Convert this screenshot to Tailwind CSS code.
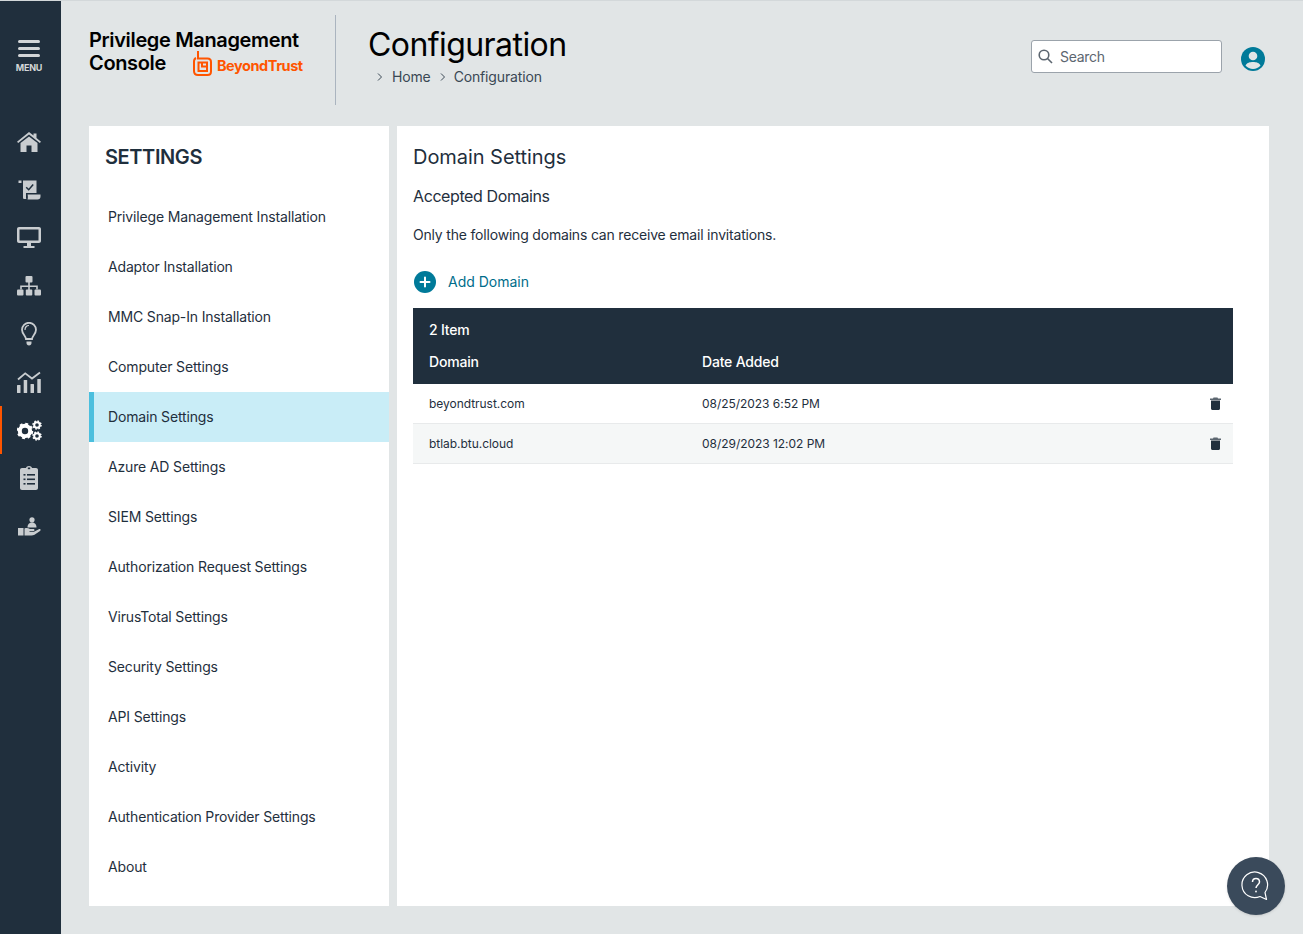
<!DOCTYPE html>
<html>
<head>
<meta charset="utf-8">
<script src="https://cdn.jsdelivr.net/npm/@tailwindcss/browser@4"></script>
</head>
<body class="m-0 overflow-hidden">
<div class="relative flex h-[934px] w-[1303px] overflow-hidden border-t border-[#d3d8da] bg-[#e1e5e6] font-['Inter',sans-serif] text-[#1f2f3d]">
  <aside class="flex h-full w-[61px] shrink-0 flex-col bg-[#202f3d] text-[#c9cdd0]">
    <div class="flex h-[117px] flex-col items-center pt-[39px] pr-[3px]">
      <svg width="22" height="18" viewBox="0 0 22 18" fill="#d3d6d8"><rect x="0" y="0" width="22" height="3" rx="1.500"/><rect x="0" y="7" width="22" height="3" rx="1.500"/><rect x="0" y="14" width="22" height="3" rx="1.500"/></svg>
      <span class="mt-[5px] text-[9px] leading-[10px] font-bold tracking-[-0.2px] text-[#d3d6d8]">MENU</span>
    </div>
    <nav class="flex flex-col pr-[3px]">
      <a class="flex h-12 items-center justify-center"><svg width="24" height="20" viewBox="0 0 24 20" fill="#c9cdd0"><path d="M12 0 L16.500 3.600V1.500H19.500V6L24 9.700 22.800 11 12 2.400 1.200 11 0 9.700Z"/><path d="M12 4.400 20.500 11V20H14.500V13.500H9.500V20H3.500V11Z"/></svg></a>
      <a class="flex h-12 items-center justify-center"><svg width="23" height="20" viewBox="0 0 23 20" fill="#c9cdd0"><path d="M0.500 0.500H3.500V3H0.500Z"/><path d="M5 0.500H18.500V13H8V18C8 18.600 8.400 19 9 19H6.500C5.500 19 5 18.500 5 17.500V3Z"/><path d="M9.500 14.500H22.500V16.500C22.500 18.400 21.400 19.500 19.500 19.500H9.500C10 18.500 10 15.500 9.500 14.500Z"/><path d="M8.200 7.200 10.700 9.700 15.200 4.500" fill="none" stroke="#202f3d" stroke-width="1.500"/></svg></a>
      <a class="flex h-12 items-center justify-center"><svg width="24" height="22" viewBox="0 0 24 22" fill="#c9cdd0"><path fill-rule="evenodd" d="M2 0H22C23.100 0 24 .9 24 2V14C24 15.100 23.100 16 22 16H2C.9 16 0 15.100 0 14V2C0 .9.9 0 2 0ZM2.500 2.500V13.500H21.500V2.500Z"/><path d="M10 16H14V19H17.500V21H6.500V19H10Z"/></svg></a>
      <a class="flex h-12 items-center justify-center"><svg width="24" height="20" viewBox="0 0 24 20" fill="#c9cdd0"><rect x="8.500" y="0" width="7" height="6.500" rx="1"/><rect x="11.200" y="6" width="1.600" height="8"/><path d="M3.200 13.500V9.500H20.800V13.500H19.200V11H4.800V13.500Z"/><rect x="0" y="13.500" width="6.500" height="6" rx="1"/><rect x="8.800" y="13.500" width="6.500" height="6" rx="1"/><rect x="17.500" y="13.500" width="6.500" height="6" rx="1"/></svg></a>
      <a class="flex h-12 items-center justify-center"><svg width="16" height="24" viewBox="0 0 16 24" fill="none" stroke="#c9cdd0" stroke-width="1.800"><path d="M5 17C5 14 1 12 1 7.800A7 7 0 0 1 15 7.800C15 12 11 14 11 17Z"/><path d="M8 3.500C5.500 3.500 4 5.500 4 8" stroke-width="1.200"/><path d="M5.500 19.500H10.500V21C10.500 22.500 9.500 23.500 8 23.500S5.500 22.500 5.500 21Z" fill="#c9cdd0" stroke="none"/></svg></a>
      <a class="flex h-12 items-center justify-center"><svg width="24" height="22" viewBox="0 0 24 22" fill="#c9cdd0"><rect x="0" y="14" width="3.500" height="8" rx=".5"/><rect x="6.700" y="9" width="3.500" height="13" rx=".5"/><rect x="13.500" y="13" width="3.500" height="9" rx=".5"/><rect x="20.300" y="8" width="3.500" height="14" rx=".5"/><path d="M1 8.500 8.200 2.300 15 7.500 23 1.500" fill="none" stroke="#c9cdd0" stroke-width="1.800"/></svg></a>
      <a class="relative flex h-12 items-center justify-center"><span class="absolute top-0 left-0 h-12 w-[2px] bg-[#ff5500]"></span><svg width="25" height="21" viewBox="0 0 25 21" fill="#ffffff"><circle cx="8" cy="11" r="5.200" fill="none" stroke="#fff" stroke-width="4"/><circle cx="8" cy="11" r="7" fill="none" stroke="#fff" stroke-width="2.500" stroke-dasharray="2.800 2.700"/><circle cx="20" cy="5" r="2.800" fill="none" stroke="#fff" stroke-width="2"/><circle cx="20" cy="5" r="4" fill="none" stroke="#fff" stroke-width="1.500" stroke-dasharray="1.600 1.540"/><circle cx="20" cy="16" r="2.800" fill="none" stroke="#fff" stroke-width="2"/><circle cx="20" cy="16" r="4" fill="none" stroke="#fff" stroke-width="1.500" stroke-dasharray="1.600 1.540"/></svg></a>
      <a class="flex h-12 items-center justify-center"><svg width="18" height="24" viewBox="0 0 18 24" fill="#c9cdd0"><path d="M2 2H6C6.200 .8 7.500 0 9 0S11.800 .8 12 2H16C17.100 2 18 2.900 18 4V22C18 23.100 17.100 24 16 24H2C.9 24 0 23.100 0 22V4C0 2.900.9 2 2 2Z"/><g fill="#202f3d"><rect x="7.800" y="1.500" width="2.400" height="1.700"/><rect x="3.500" y="8" width="2" height="1.600"/><rect x="7" y="8" width="8" height="1.600"/><rect x="3.500" y="12.500" width="2" height="1.600"/><rect x="7" y="12.500" width="8" height="1.600"/><rect x="3.500" y="17" width="2" height="1.600"/><rect x="7" y="17" width="8" height="1.600"/></g></svg></a>
      <a class="flex h-12 items-center justify-center"><svg width="23" height="19" viewBox="0 0 23 19" fill="#c9cdd0"><circle cx="14" cy="2.800" r="2.600"/><path d="M9.500 10.500C9.500 7 11.500 5.500 14 5.500S18.500 7 18.500 10.500Z"/><rect x="0" y="11" width="5.500" height="7.500"/><path d="M6.500 11.500C8.500 10.800 10 11 12 12H15.500C16.800 12 16.800 14.200 15.500 14.200H11.500V15H15.500L20.800 12.200C22.300 11.600 23.300 13 22 14L16.500 17.800C15.500 18.400 14.500 18.500 13.500 18.500H6.500Z"/></svg></a>
    </nav>
  </aside>

  <div class="min-w-0 flex-1">
    <header class="flex h-[125px] items-start">
      <div class="ml-[28px] w-[246px] pt-[27px]">
        <div class="text-[20px] leading-[24px] font-semibold tracking-[-0.35px] text-black">Privilege Management</div>
        <div class="flex h-[22px] items-center text-[20px] leading-[22px] font-semibold tracking-[-0.35px] text-black">Console
          <svg class="ml-[27px]" width="19" height="25" viewBox="0 0 19 25" fill="none" stroke="#ff5500" stroke-width="2"><path d="M5 0V7.500H14.500C16.500 7.500 18 9 18 11V20.500C18 22.500 16.500 24 14.500 24H5C2.500 24 1 22.500 1 20V10.500C1 8.500 1.800 7.500 3 7"/><path d="M5.500 11.500H14V20H5.500Z"/><path d="M9 11.500V15.500H14"/></svg>
          <span class="ml-[5px] mt-[5px] text-[14.5px] font-bold tracking-[-0.45px] text-[#ff5500]">BeyondTrust</span>
        </div>
      </div>
      <div class="mt-[14px] h-[90px] w-px bg-[#aab4bf]"></div>
      <div class="ml-[32px] pt-[24px]">
        <h1 class="text-[32px] leading-[39px] font-normal tracking-[-0.57px] text-black">Configuration</h1>
        <div class="mt-[3px] flex items-center text-sm leading-[20px] tracking-[-0.15px] text-[#3a4854]">
          <svg class="ml-[9px] mr-[9px]" width="6" height="8" viewBox="0 0 6 8" fill="none" stroke="#3a4854"><path d="M1 .5 4.500 4 1 7.500"/></svg>Home
          <svg class="ml-[9px] mr-[8px]" width="6" height="8" viewBox="0 0 6 8" fill="none" stroke="#3a4854"><path d="M1 .5 4.500 4 1 7.500"/></svg>Configuration
        </div>
      </div>
      <div class="ml-auto flex items-center pr-[38px] pt-[39px]">
        <div class="flex h-[33px] w-[191px] items-center rounded-[3px] border border-[#9ba3ab] bg-white pl-[6px]">
          <svg width="15" height="15" viewBox="0 0 15 15" fill="none" stroke="#5c6670" stroke-width="1.600"><circle cx="6" cy="6" r="4.800"/><path d="M9.500 9.500 14 14"/></svg>
          <span class="ml-[7px] text-sm tracking-[-0.3px] text-[#5c6670]">Search</span>
        </div>
        <svg class="ml-[19px] mt-[4px]" width="24" height="24" viewBox="0 0 24 24"><circle cx="12" cy="12" r="12" fill="#007a99"/><circle cx="12" cy="9" r="4.300" fill="#e1e5e6"/><path d="M4.500 18.500C6 15.500 9 15 12 15S18 15.500 19.500 18.500C17.500 20.800 15 22 12 22S6.500 20.800 4.500 18.500Z" fill="#e1e5e6"/></svg>
      </div>
    </header>

    <main class="ml-[28px] flex h-[780px] w-[1180px] gap-2">
      <section class="w-[300px] shrink-0 bg-white">
        <h2 class="h-[66px] pt-[19px] pl-[16px] text-[20px] leading-[24px] font-semibold tracking-[-0.4px] text-[#1f2f3d]">SETTINGS</h2>
        <ul class="text-sm tracking-[-0.16px] text-[#1f2f3d]">
          <li class="flex h-[50px] items-center pl-[19px]">Privilege Management Installation</li>
          <li class="flex h-[50px] items-center pl-[19px]">Adaptor Installation</li>
          <li class="flex h-[50px] items-center pl-[19px]">MMC Snap-In Installation</li>
          <li class="flex h-[50px] items-center pl-[19px]">Computer Settings</li>
          <li class="flex h-[50px] items-center border-l-[5px] border-[#4bbfde] bg-[#c9edf7] pl-[14px]">Domain Settings</li>
          <li class="flex h-[50px] items-center pl-[19px]">Azure AD Settings</li>
          <li class="flex h-[50px] items-center pl-[19px]">SIEM Settings</li>
          <li class="flex h-[50px] items-center pl-[19px]">Authorization Request Settings</li>
          <li class="flex h-[50px] items-center pl-[19px]">VirusTotal Settings</li>
          <li class="flex h-[50px] items-center pl-[19px]">Security Settings</li>
          <li class="flex h-[50px] items-center pl-[19px]">API Settings</li>
          <li class="flex h-[50px] items-center pl-[19px]">Activity</li>
          <li class="flex h-[50px] items-center pl-[19px]">Authentication Provider Settings</li>
          <li class="flex h-[50px] items-center pl-[19px]">About</li>
        </ul>
      </section>
      <section class="flex-1 bg-white pl-[16px] pr-[36px]">
        <h2 class="pt-[18px] text-[20px] leading-[26px] font-normal tracking-[-0.05px] text-[#1f2f3d]">Domain Settings</h2>
        <h3 class="mt-[14px] text-base leading-[24px] font-normal tracking-[-0.4px] text-[#1f2f3d]">Accepted Domains</h3>
        <p class="mt-[16px] text-sm leading-[22px] tracking-[-0.19px] text-[#1f2f3d]">Only the following domains can receive email invitations.</p>
        <div class="mt-[24px] flex h-[24px] items-center text-sm text-[#006d8a]">
          <svg class="ml-px" width="22" height="22" viewBox="0 0 22 22"><circle cx="11" cy="11" r="11" fill="#007a99"/><path d="M11 6.500V15.500M6.500 11H15.500" stroke="#fff" stroke-width="2" stroke-linecap="round"/></svg>
          <span class="ml-[12px]">Add Domain</span>
        </div>
        <div class="mt-[14px] h-[76px] bg-[#202f3d] pl-[16px] text-sm font-medium tracking-[-0.2px] text-white">
          <div class="flex h-[44px] items-center">2 Item</div>
          <div class="flex h-[20px] items-center"><span class="w-[273px]">Domain</span><span>Date Added</span></div>
        </div>
        <div class="flex h-[40px] items-center border-b border-[#e8eaeb] pl-[16px] text-xs tracking-[-0.04px] text-[#1f2f3d]"><span class="w-[273px]">beyondtrust.com</span><span>08/25/2023 6:52 PM</span>
          <svg class="ml-auto mr-[12px]" width="11" height="13" viewBox="0 0 11 13"><path d="M3.500 .5H7.500L8 1.500H11V3H0V1.500H3Z" fill="#5c6670"/><path d="M1 3.500H10V11.500C10 12.300 9.300 13 8.500 13H2.500C1.700 13 1 12.300 1 11.500Z" fill="#202f3d"/></svg>
        </div>
        <div class="flex h-[40px] items-center border-b border-[#e8eaeb] bg-[#f5f7f7] pl-[16px] text-xs tracking-[-0.04px] text-[#1f2f3d]"><span class="w-[273px]">btlab.btu.cloud</span><span>08/29/2023 12:02 PM</span>
          <svg class="ml-auto mr-[12px]" width="11" height="13" viewBox="0 0 11 13"><path d="M3.500 .5H7.500L8 1.500H11V3H0V1.500H3Z" fill="#5c6670"/><path d="M1 3.500H10V11.500C10 12.300 9.300 13 8.500 13H2.500C1.700 13 1 12.300 1 11.500Z" fill="#202f3d"/></svg>
        </div>
      </section>
    </main>
  </div>

  <button class="absolute top-[856px] left-[1227px] flex h-[58px] w-[58px] items-center justify-center rounded-full bg-[#3a4a5b] shadow-sm">
    <svg width="30" height="30" viewBox="0 0 30 30" fill="none" stroke="#fff" stroke-width="1.200"><path d="M24 21.500A12.800 12.800 0 1 0 19 25.500L25.500 28.500Z" stroke-linejoin="round"/><path d="M11.500 11C11.500 9 13 7.500 15 7.500S18.500 9 18.500 11C18.500 13.500 15 14 15 17" stroke-width="1.500"/><circle cx="15" cy="20.500" r=".9" fill="#fff" stroke="none"/></svg>
  </button>
</div>
</body>
</html>
